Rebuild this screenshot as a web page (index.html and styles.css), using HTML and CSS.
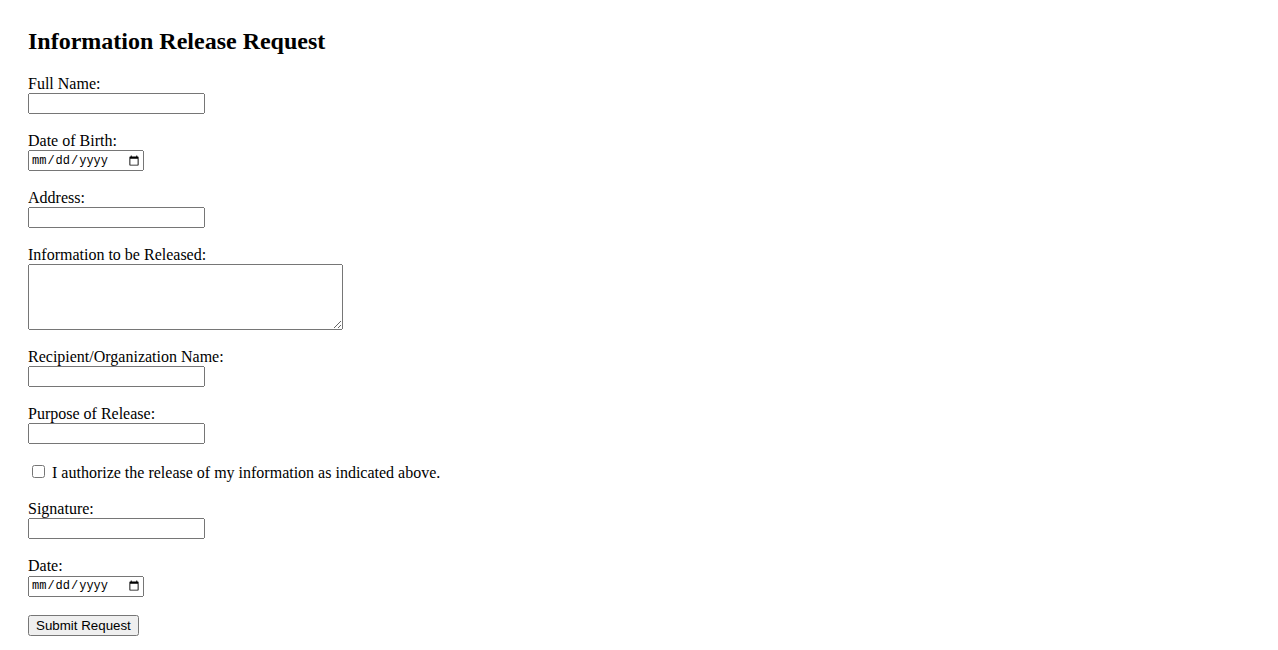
FILE: index.html
```html
<!DOCTYPE html>
<html lang="en">
<head>
  <meta charset="UTF-8"/>
  <title>Information Release Request</title>
  <link rel="stylesheet" href="styles.css">
</head>
<body>

  <h2>Information Release Request</h2>

  <form id="releaseForm">
    <label for="fullName">Full Name:</label><br>
    <input type="text" id="fullName" class="field" required><br><br>

    <label for="dob">Date of Birth:</label><br>
    <input type="date" id="dob" class="date-field" required><br><br>

    <label for="address">Address:</label><br>
    <input type="text" id="address" class="field" required><br><br>

    <label for="info">Information to be Released:</label><br>
    <textarea id="info" class="area" required></textarea><br><br>

    <label for="recipient">Recipient/Organization Name:</label><br>
    <input type="text" id="recipient" class="field" required><br><br>

    <label for="purpose">Purpose of Release:</label><br>
    <input type="text" id="purpose" class="field" required><br><br>

    <input type="checkbox" id="authorize" class="check" required>
    <label for="authorize">I authorize the release of my information as indicated above.</label><br><br>

    <label for="signature">Signature:</label><br>
    <input type="text" id="signature" class="field" required><br><br>

    <label for="signDate">Date:</label><br>
    <input type="date" id="signDate" class="date-field" required><br><br>

    <button type="submit" class="submit-btn">Submit Request</button>
  </form>

</body>
</html>
```

FILE: styles.css
```css
body {
  margin: 28px;
  font-family: 'Liberation Serif', 'Times New Roman', serif;
  font-size: 16px;
  color: #000;
  background: #fff;
}

h2 {
  margin: 0 0 0.83em;
  font-size: 24px;
  font-weight: bold;
}

.field {
  box-sizing: border-box;
  width: 177px;
  height: 21px;
}

.date-field {
  box-sizing: border-box;
  width: 116px;
  height: 21px;
  font-family: 'Liberation Mono', monospace;
  font-size: 12px;
}

.area {
  box-sizing: border-box;
  width: 315px;
  height: 66px;
  vertical-align: bottom;
}

.check {
  margin: 3px 3px 3px 4px;
}

.submit-btn {
  font-family: 'Liberation Sans', Arial, sans-serif;
  font-size: 13.33px;
}
```
